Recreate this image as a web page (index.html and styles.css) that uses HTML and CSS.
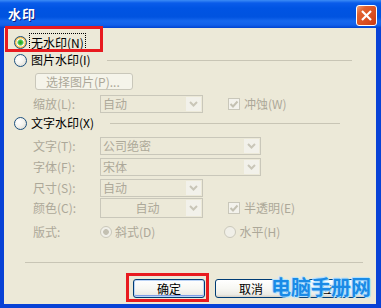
FILE: index.html
```html
<!DOCTYPE html>
<html lang="zh">
<head>
<meta charset="utf-8">
<title>水印</title>
<link rel="stylesheet" href="styles.css">
</head>
<body>
<div class="window">
  <div class="titlebar">
    <span class="title">水印</span>
    <span class="close">
      <svg width="21" height="21" viewBox="0 0 21 21"><line x1="6" y1="6" x2="15" y2="15" stroke="#fff" stroke-width="2.2"/><line x1="15" y1="6" x2="6" y2="15" stroke="#fff" stroke-width="2.2"/></svg>
    </span>
  </div>
  <div class="client">
    <div class="row r-none"><span class="radio checked hover"></span><span class="focus">无水印(N)</span></div>
    <div class="row r-pic"><span class="radio"></span><span class="opt">图片水印(I)</span><span class="sep"></span></div>
    <div class="row r-btn"><span class="dbtn">选择图片(P)...</span></div>
    <div class="row field f-scale">
      <span class="label">缩放(L):</span>
      <span class="combo short"><span class="val">自动</span><span class="arrow"><svg width="15" height="14" viewBox="0 0 15 14"><polyline points="4,5 7.5,8.5 11,5" fill="none" stroke="#C9C6B8" stroke-width="2"/></svg></span></span>
      <span class="check"><svg width="12" height="12" viewBox="0 0 12 12"><polyline points="2.5,6 5,8.5 9.5,3.5" fill="none" stroke="#C4C1B2" stroke-width="2"/></svg></span>
      <span class="dis">冲蚀(W)</span>
    </div>
    <div class="row r-txt"><span class="radio"></span><span class="opt">文字水印(X)</span><span class="sep"></span></div>
    <div class="row field f-text">
      <span class="label">文字(T):</span>
      <span class="combo long"><span class="val">公司绝密</span><span class="arrow"><svg width="15" height="14" viewBox="0 0 15 14"><polyline points="4,5 7.5,8.5 11,5" fill="none" stroke="#C9C6B8" stroke-width="2"/></svg></span></span>
    </div>
    <div class="row field f-font">
      <span class="label">字体(F):</span>
      <span class="combo long"><span class="val">宋体</span><span class="arrow"><svg width="15" height="14" viewBox="0 0 15 14"><polyline points="4,5 7.5,8.5 11,5" fill="none" stroke="#C9C6B8" stroke-width="2"/></svg></span></span>
    </div>
    <div class="row field f-size">
      <span class="label">尺寸(S):</span>
      <span class="combo short"><span class="val">自动</span><span class="arrow"><svg width="15" height="14" viewBox="0 0 15 14"><polyline points="4,5 7.5,8.5 11,5" fill="none" stroke="#C9C6B8" stroke-width="2"/></svg></span></span>
    </div>
    <div class="row field f-color">
      <span class="label">颜色(C):</span>
      <span class="combo short tall"><span class="val center">自动</span><span class="arrow"><svg width="15" height="14" viewBox="0 0 15 14"><polyline points="4,5 7.5,8.5 11,5" fill="none" stroke="#C9C6B8" stroke-width="2"/></svg></span></span>
      <span class="check"><svg width="12" height="12" viewBox="0 0 12 12"><polyline points="2.5,6 5,8.5 9.5,3.5" fill="none" stroke="#C4C1B2" stroke-width="2"/></svg></span>
      <span class="dis">半透明(E)</span>
    </div>
    <div class="row field f-layout">
      <span class="label">版式:</span>
      <span class="dradio on"></span><span class="dis">斜式(D)</span>
      <span class="dradio h"></span><span class="dis">水平(H)</span>
    </div>
    <div class="bottom-sep"></div>
    <div class="buttons">
      <span class="btn default">确定</span>
      <span class="btn">取消</span>
      <span class="btn">应用</span>
    </div>
  </div>
  <div class="mark mark-none"></div>
  <div class="mark mark-ok"></div>
  <div class="watermark">电脑手册网</div>
</div>
</body>
</html>
```
FILE: styles.css
```css
html, body {
  margin: 0;
  padding: 0;
}
body {
  width: 381px;
  height: 308px;
  overflow: hidden;
  font-family: "Noto Sans CJK SC", "Liberation Sans", sans-serif;
  font-size: 12px;
  color: #000;
}
.window {
  position: relative;
  width: 381px;
  height: 308px;
  display: flex;
  flex-direction: column;
  background: #0842D6;
}
.titlebar {
  height: 28px;
  flex: none;
  display: flex;
  align-items: center;
  justify-content: space-between;
  padding: 0 4px 0 8px;
  background: linear-gradient(to bottom, #3C8CF6 0, #0A5CEA 3px, #0054E3 8px, #0053E0 17px, #1668EE 21px, #1160EA 25px, #0043CF 28px);
}
.title {
  color: #fff;
  font-weight: 700;
  font-size: 13px;
  line-height: 16px;
  letter-spacing: 1px;
  text-shadow: 1px 1px 0 #0A1E8A;
}
.close {
  width: 21px;
  height: 21px;
  margin-top: 3px;
  box-sizing: border-box;
  border: 1px solid #fff;
  border-radius: 3px;
  background: linear-gradient(135deg, #F0A17A 0, #E2622F 25%, #D84B1E 70%, #C93A10 100%);
  display: flex;
}
.close svg { margin: -1px; }
.client {
  flex: 1;
  background: #ECE9D8;
  margin: 0 5px 4px 4px;
  padding-left: 10px;
  display: flex;
  flex-direction: column;
  position: relative;
}
.row {
  display: flex;
  align-items: center;
  flex: none;
  line-height: 16px;
  white-space: nowrap;
}
.r-none { margin-top: 5px; height: 18px; }
.r-pic { height: 18px; }
.r-btn { margin-top: 4px; height: 17px; padding-left: 21px; }
.r-txt { margin-top: 1px; height: 18px; }
.field { padding-left: 19px; height: 18px; }
.f-scale { margin-top: 5px; }
.f-text { margin-top: 5px; }
.f-font { margin-top: 3px; }
.f-size { margin-top: 3px; }
.f-color { margin-top: 1px; height: 20px; }
.f-layout { margin-top: 6px; height: 16px; }

.radio {
  width: 13px;
  height: 13px;
  box-sizing: border-box;
  border-radius: 50%;
  border: 1px solid #1C5180;
  background: radial-gradient(circle at 35% 35%, #FFFFFF 0, #F4F3EE 45%, #D6D3C8 100%);
  margin-right: 3px;
  position: relative;
  flex: none;
}
.radio.hover {
  background: radial-gradient(circle, #21A121 0, #3FBF3F 2px, #A7DFA7 3px, #FFFFFF 3.6px, #FDD889 4.2px, #F8B33A 5.5px);
}
.focus {
  outline: 1px dotted #000;
  outline-offset: 0;
  padding: 0 1px;
  height: 17px;
  line-height: 17px;
}
.opt { padding-left: 1px; }
.sep {
  flex: none;
  height: 1px;
  background: #C8C5B5;
}
.r-pic .sep { width: 245px; margin-left: 16px; }
.r-txt .sep { width: 230px; margin-left: 16px; }

.dbtn {
  width: 98px;
  height: 17px;
  box-sizing: border-box;
  border: 1px solid #C9C7BA;
  border-radius: 3px;
  background: #F5F4EA;
  color: #ACA899;
  line-height: 15px;
  padding-left: 10px;
}
.label {
  width: 67px;
  color: #ACA899;
  flex: none;
}
.dis { color: #ACA899; }
.combo {
  height: 100%;
  box-sizing: border-box;
  border: 1px solid #C9C7BA;
  background: #ECE9D8;
  display: flex;
  align-items: center;
  color: #ACA899;
  flex: none;
}
.combo.short { width: 103px; }
.combo.long { width: 161px; }
.val {
  flex: 1;
  padding-left: 2px;
}
.val.center { text-align: center; padding-left: 8px; }
.arrow {
  width: 15px;
  height: calc(100% - 2px);
  margin-right: 1px;
  background: #F2F1EA;
  display: flex;
  align-items: center;
  justify-content: center;
}
.check {
  width: 12px;
  height: 12px;
  box-sizing: border-box;
  border: 1px solid #C9C7BA;
  background: #F3F2EC;
  margin-left: 25px;
  margin-right: 4px;
  display: flex;
  flex: none;
}
.check svg { margin: -1px; }
.dradio {
  width: 12px;
  height: 12px;
  box-sizing: border-box;
  border-radius: 50%;
  border: 1px solid #CAC8BB;
  background: #F0EFE8;
  margin-right: 3px;
  flex: none;
}
.dradio.on {
  background: radial-gradient(circle, #C3C0B2 0, #C3C0B2 2.5px, #F0EFE8 3.2px);
}
.dradio.h { margin-left: 69px; }

.bottom-sep {
  height: 1px;
  background: #C8C5B5;
  width: 338px;
  margin-left: 11px;
  margin-top: 22px;
  flex: none;
}
.buttons {
  display: flex;
  justify-content: flex-end;
  gap: 10px;
  padding-right: 7px;
  margin-top: 16px;
}
.btn {
  width: 72px;
  height: 19px;
  box-sizing: border-box;
  border: 1px solid #003C74;
  border-radius: 3px;
  background: linear-gradient(to bottom, #FFFFFF 0, #F7F7F3 50%, #ECEBE5 85%, #D6D0C5 100%);
  text-align: center;
  line-height: 17px;
  font-size: 12px;
}
.btn.default {
  box-shadow: inset 0 0 0 1px #BCD4F6, inset 0 -2px 0 #7F9DE8;
}
.mark {
  position: absolute;
  box-sizing: border-box;
  border: 3px solid #E81A1F;
}
.mark-none { left: 5px; top: 26px; width: 98px; height: 26px; }
.mark-ok { left: 126px; top: 273px; width: 83px; height: 29px; }
.watermark {
  position: absolute;
  left: 271px;
  top: 275px;
  font-size: 20px;
  line-height: 24px;
  font-weight: 700;
  color: #1A8BE6;
  letter-spacing: 0;
  text-shadow: 0 0 2px #9FD8FF, 1px 1px 0 #B9E4FF, -1px -1px 0 #B9E4FF;
}
```
